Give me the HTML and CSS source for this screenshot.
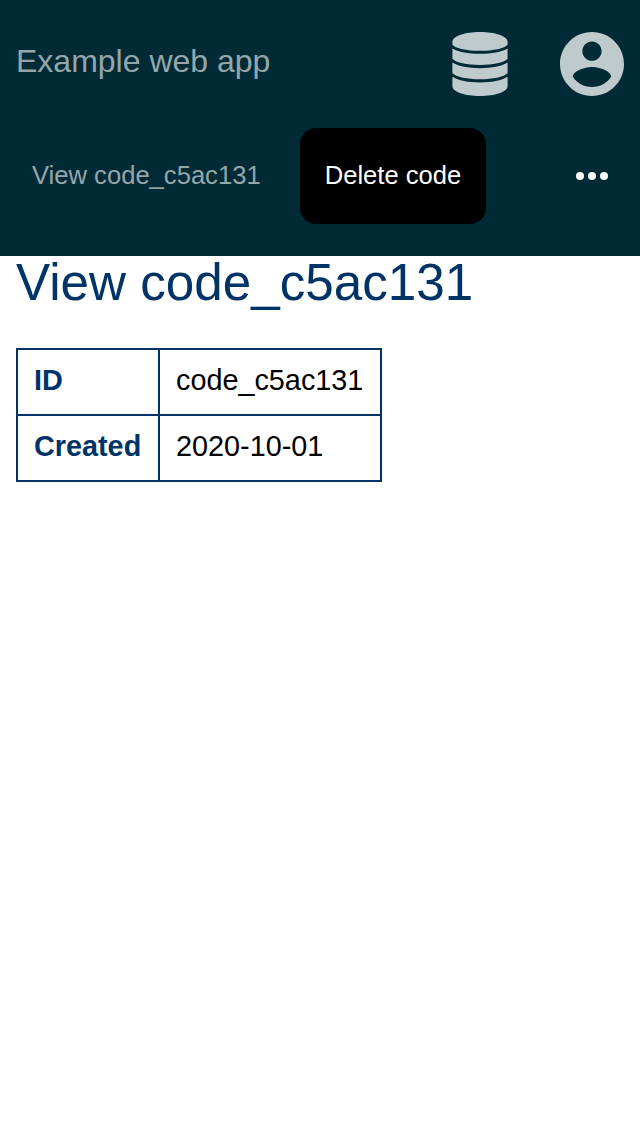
FILE: index.html
```html
<!DOCTYPE html>
<html lang="en">
<head>
<meta charset="utf-8">
<title>Example web app</title>
<link rel="stylesheet" href="styles.css">
</head>
<body>
<header class="header">
  <div class="topbar">
    <a class="brand">Example web app</a>
    <div class="icons">
      <svg class="icon" viewBox="0 0 64 64"><path d="M4.400 10C4.400 4 17 0 32 0s27.600 4 27.600 10v2.500c-3 4-14 6.300-27.600 6.300S7.400 16.500 4.400 12.500z"/><path d="M4.400 16.500c6 3.500 16 5.300 27.600 5.300s21.600-1.800 27.600-5.300V27c-4 3.700-14.500 5.900-27.600 5.900S8.400 30.700 4.400 27z"/><path d="M4.400 30.600c6 3.700 16 5.700 27.600 5.700s21.600-2 27.600-5.700V41.300c-4 3.700-14.500 6-27.600 6s-23.600-2.300-27.600-6z"/><path d="M4.400 44.800c6 3.700 16 5.700 27.600 5.700s21.600-2 27.600-5.700V54C59.600 60 47 64 32 64S4.400 60 4.400 54z"/></svg>
      <svg class="icon" viewBox="2 2 20 20"><path d="M12 2C6.480 2 2 6.480 2 12s4.480 10 10 10 10-4.480 10-10S17.520 2 12 2zm0 3c1.660 0 3 1.340 3 3s-1.340 3-3 3-3-1.340-3-3 1.340-3 3-3zm0 14.200c-2.500 0-4.710-1.280-6-3.220.03-1.990 4-3.080 6-3.080 1.990 0 5.970 1.090 6 3.080-1.290 1.940-3.500 3.220-6 3.220z"/></svg>
    </div>
  </div>
  <nav class="nav">
    <a class="crumb">View code_c5ac131</a>
    <a class="action">Delete code</a>
    <svg class="more" viewBox="4 10 16 4"><circle cx="6" cy="12" r="2"/><circle cx="12" cy="12" r="2"/><circle cx="18" cy="12" r="2"/></svg>
  </nav>
</header>
<main class="content">
  <h1 class="title">View code_c5ac131</h1>
  <table class="details">
    <tr><th>ID</th><td>code_c5ac131</td></tr>
    <tr><th>Created</th><td>2020-10-01</td></tr>
  </table>
</main>
</body>
</html>
```
FILE: styles.css
```css
* {
  box-sizing: border-box;
}

body {
  margin: 0;
  background: #fff;
  color: #000;
  font-family: "Liberation Sans", Arial, sans-serif;
}

.header {
  height: 256px;
  background: #002b36;
}

.topbar {
  display: flex;
  align-items: center;
  justify-content: space-between;
  height: 128px;
  padding: 0 16px;
}

.brand {
  padding-bottom: 6px;
  color: #95a6aa;
  font-size: 32px;
  line-height: 36px;
}

.icons {
  display: flex;
  gap: 48px;
}

.icon {
  width: 64px;
  height: 64px;
  fill: #bfcacd;
}

.nav {
  display: flex;
  align-items: center;
  height: 96px;
  padding: 0 32px;
  font-size: 25.6px;
}

.crumb {
  width: 268px;
  height: 96px;
  color: #95a6aa;
  line-height: 94px;
}

.action {
  width: 186px;
  height: 96px;
  border-radius: 16px;
  background: #000;
  color: #fff;
  line-height: 94px;
  text-align: center;
}

.more {
  width: 32px;
  height: 8px;
  margin-left: auto;
  fill: #fff;
}

.content {
  padding: 0 16px;
}

.title {
  margin: 0 0 38px;
  color: #003366;
  font-size: 51.2px;
  font-weight: 400;
  line-height: 54px;
}

.details {
  width: 366px;
  border-collapse: collapse;
  font-size: 28.8px;
  line-height: 32px;
}

.details th,
.details td {
  padding: 14px 16px 18px;
  border: 2px solid #003366;
  text-align: left;
}

.details th {
  width: 142px;
  color: #003366;
}
```
